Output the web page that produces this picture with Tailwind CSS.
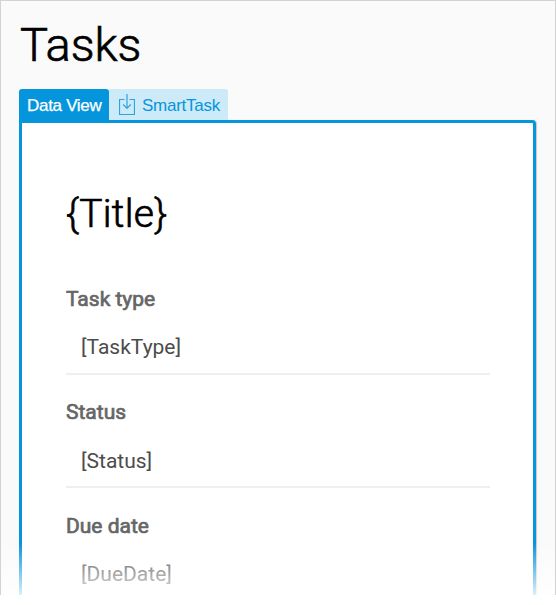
<!DOCTYPE html>
<html lang="en">
<head>
<meta charset="utf-8">
<title>Tasks</title>
<script src="https://cdn.jsdelivr.net/npm/@tailwindcss/browser@4"></script>
</head>
<body class="bg-white font-[Roboto,sans-serif] overflow-hidden">
<main class="relative h-[595px] w-[556px] overflow-hidden border-x border-t border-[#d3d3d3] bg-[#fafafa] pl-[18px]">
  <h1 class="h-[88px] pt-4 pl-px text-[47px] leading-[56px] font-light text-black [-webkit-text-stroke:0.7px_black]">Tasks</h1>
  <div class="flex h-[31px] font-['Liberation_Sans',sans-serif] text-[17px] leading-[33px]">
    <div class="w-[90px] rounded-t-[3px] bg-[#0595dc] pl-2 tracking-[-0.3px] text-white [-webkit-text-stroke:0.25px_white]">Data View</div>
    <div class="flex w-[119px] rounded-tr-[3px] bg-[#cdeaf8] pl-[10px] text-[#0595dc]">
      <svg class="mt-[5px] h-[21px] w-4 shrink-0" viewBox="0 0 16 21" fill="none" stroke="#2ba5e1" stroke-width="1.2"><path d="M5.5 5.5H.5v15h15v-15h-5M8 0v14M4.2 10.5L8 14.3l3.8-3.8"/></svg>
      <span class="ml-[7px] tracking-[-0.27px]">SmartTask</span>
    </div>
  </div>
  <section class="h-[520px] w-[517px] rounded-tr-[4px] border-[3px] border-[#0595dc] bg-white pl-[44px] shadow-[1px_0_1px_rgba(0,0,0,0.2)]">
    <h2 class="h-[164px] pt-[67px] text-[39px] leading-[48px] font-light tracking-[0.3px] text-black [-webkit-text-stroke:0.7px_black]">{Title}</h2>
    <div class="h-[113px] w-[424px]">
      <div class="h-[86px]"><div class="text-[21px] leading-6 text-[#666] [-webkit-text-stroke:0.7px_#666]">Task type</div><div class="pt-6 pl-[15px] text-[21px] leading-6 text-[#4c4c4c]">[TaskType]</div></div>
      <div class="h-[2px] bg-[#efefef]"></div>
    </div>
    <div class="h-[114px] w-[424px]">
      <div class="h-[86px]"><div class="text-[21px] leading-6 text-[#666] [-webkit-text-stroke:0.7px_#666]">Status</div><div class="pt-[25px] pl-[15px] text-[21px] leading-6 text-[#4c4c4c]">[Status]</div></div>
      <div class="h-[2px] bg-[#efefef]"></div>
    </div>
    <div class="w-[424px]"><div class="text-[21px] leading-6 text-[#666] [-webkit-text-stroke:0.7px_#666]">Due date</div><div class="pt-6 pl-[15px] text-[21px] leading-6 text-[#4c4c4c]">[DueDate]</div></div>
  </section>
  <div class="absolute inset-x-0 bottom-0 h-[52px] bg-linear-to-b from-white/0 to-white/85"></div>
</main>
</body>
</html>
